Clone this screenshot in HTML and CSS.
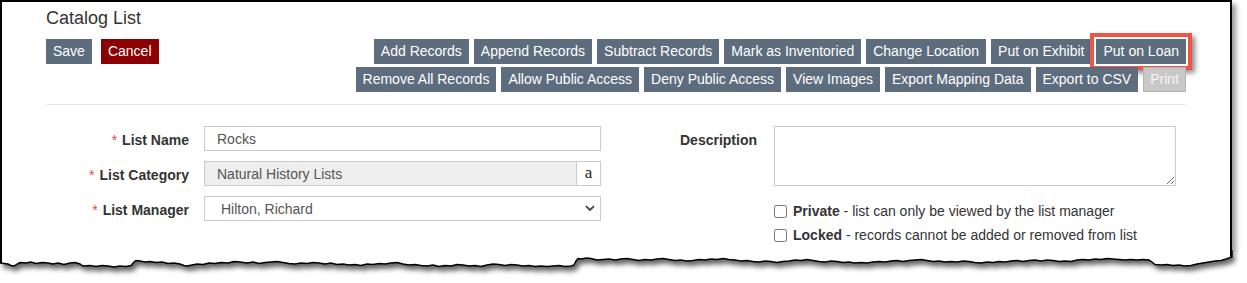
FILE: index.html
```html
<!DOCTYPE html>
<html lang="en">
<head>
    <meta charset="UTF-8">
    <meta name="viewport" content="width=device-width, initial-scale=1.0">
    <title>Catalog List</title>
    <link rel="stylesheet" href="styles.css">
</head>
<body>
    <div class="shot">
        <div class="page">
            <h1 class="title">Catalog List</h1>

            <div class="toolbar">
                <div class="main-actions">
                    <button class="btn">Save</button>
                    <button class="btn btn-cancel">Cancel</button>
                </div>
                <div class="list-actions">
                    <div class="btn-row">
                        <button class="btn">Add Records</button>
                        <button class="btn">Append Records</button>
                        <button class="btn">Subtract Records</button>
                        <button class="btn">Mark as Inventoried</button>
                        <button class="btn">Change Location</button>
                        <button class="btn">Put on Exhibit</button>
                        <button class="btn btn-callout">Put on Loan</button>
                    </div>
                    <div class="btn-row">
                        <button class="btn">Remove All Records</button>
                        <button class="btn">Allow Public Access</button>
                        <button class="btn">Deny Public Access</button>
                        <button class="btn">View Images</button>
                        <button class="btn">Export Mapping Data</button>
                        <button class="btn">Export to CSV</button>
                        <button class="btn btn-disabled">Print</button>
                    </div>
                </div>
            </div>

            <hr class="divider">

            <form class="list-form">
                <div class="fields">
                    <label class="field-label" for="list-name"><span class="req">*</span>List Name</label>
                    <input class="field" type="text" id="list-name" value="Rocks">

                    <label class="field-label" for="list-category"><span class="req">*</span>List Category</label>
                    <div class="field field-lookup">
                        <input type="text" id="list-category" value="Natural History Lists" readonly>
                        <span class="lookup-btn">a</span>
                    </div>

                    <label class="field-label" for="list-manager"><span class="req">*</span>List Manager</label>
                    <div class="select-wrap">
                        <select class="field" id="list-manager">
                            <option>Hilton, Richard</option>
                        </select>
                        <svg class="chevron" width="10" height="7" viewBox="0 0 10 7"><path d="M1 1.2 L5 5 L9 1.2" fill="none" stroke="#444" stroke-width="1.8"/></svg>
                    </div>
                </div>

                <div class="fields fields-right">
                    <label class="field-label" for="description">Description</label>
                    <textarea class="field field-area" id="description"></textarea>

                    <span></span>
                    <div class="checks">
                        <label class="check"><input type="checkbox"><b>Private</b>&nbsp;- list can only be viewed by the list manager</label>
                        <label class="check"><input type="checkbox"><b>Locked</b>&nbsp;- records cannot be added or removed from list</label>
                    </div>
                </div>
            </form>
        </div>
    </div>

    <svg class="tear" width="1247" height="33" viewBox="0 0 1247 33">
        <defs>
            <filter id="soft" x="-5%" y="-50%" width="110%" height="200%">
                <feGaussianBlur stdDeviation="2.4"/>
            </filter>
            <path id="edge-shape" d="M0,250 L0,263 L4,263.5 L8,264 L11,265.5 L14,266 L17,264 L20,262.5 L26,263 L31,262 L36,263.5 L42,262.5 L48,263 L53,264 L58,263 L64,264.5 L70,263 L75,262.5 L80,264 L83,266 L90,265.5 L96,266.5 L102,265.5 L108,266 L114,267 L120,266 L126,266.5 L131,265.5 L134,262 L136,260.5 L140,261 L145,262 L150,261.5 L156,262.5 L162,262 L168,263.5 L174,263 L180,264 L184,265.5 L187,266 L192,265 L197,264 L203,264.5 L209,263 L215,263.5 L221,262.5 L228,263 L234,261.5 L240,262 L247,263 L253,262 L259,263.5 L265,262.5 L271,262 L277,261.5 L283,262.5 L289,263.5 L295,264 L301,263 L307,263.5 L313,262.5 L319,263 L325,264 L331,263 L337,264.5 L343,264 L349,265 L355,264.5 L361,265.5 L367,264 L373,264.5 L379,263.5 L385,264 L391,263 L397,262.5 L403,264 L409,265 L415,264.5 L421,265.5 L427,266 L433,265 L439,266.5 L445,265.5 L451,266 L457,264.5 L463,265 L469,266 L475,265.5 L481,266.5 L487,265 L493,264 L499,264.5 L505,265.5 L511,264.5 L517,265 L523,266 L529,265.5 L535,266.5 L541,266 L547,266.5 L553,266 L559,265.5 L565,266.5 L571,266 L574,265 L576,261 L578,258.5 L582,259 L586,258 L591,258.5 L597,260 L603,259.5 L609,259 L615,260 L621,259 L627,258.5 L633,259.5 L639,260.5 L645,259.5 L651,260 L657,259 L663,258.5 L669,259.5 L675,260.5 L681,260 L687,261 L693,260.5 L699,259.5 L705,260 L711,259 L717,259.5 L723,258.5 L729,259.5 L735,260 L741,261 L747,260.5 L753,261.5 L759,262 L765,261 L771,261.5 L777,262.5 L783,261.5 L789,261 L795,260 L801,260.5 L807,259.5 L813,260.5 L819,261.5 L825,262 L831,261 L837,261.5 L843,262.5 L849,262 L855,263 L861,262.5 L867,263 L873,262 L879,261.5 L885,262 L891,261 L897,260.5 L903,261.5 L909,260.5 L915,260 L921,259.5 L927,260.5 L933,261.5 L939,261 L945,262 L951,261.5 L957,262 L963,261 L969,261.5 L975,262.5 L981,263 L987,262 L993,262.5 L999,261.5 L1005,262 L1011,261 L1017,260.5 L1023,261.5 L1029,260.5 L1035,260 L1041,261 L1047,260 L1053,260.5 L1059,261.5 L1065,261 L1071,261.5 L1077,260 L1083,259.5 L1089,260 L1095,259 L1101,259.5 L1107,258.5 L1113,259 L1119,259.5 L1125,260 L1131,259.5 L1137,260 L1143,259.5 L1149,260 L1152,262 L1155,264.5 L1161,265 L1167,264.5 L1173,265.5 L1179,265 L1185,266 L1191,265.5 L1197,264 L1203,263 L1209,262 L1215,261 L1221,260.5 L1226,259 L1229,258 L1232,257 L1232,250 Z"/>
        </defs>
        <g transform="translate(0,-250)">
            <use href="#edge-shape" class="tear-shadow" transform="translate(3,5)" filter="url(#soft)"/>
            <use href="#edge-shape" class="tear-paper"/>
            <use href="#edge-shape" class="tear-line"/>
            <rect x="0" y="248" width="1232" height="3" fill="#fff"/>
            <line x1="1" y1="248" x2="1" y2="263" stroke="#000" stroke-width="2"/>
            <line x1="1231" y1="248" x2="1231" y2="257" stroke="#000" stroke-width="2"/>
        </g>
    </svg>
</body>
</html>
```

FILE: styles.css
```css
body { margin: 0; background: #fff; font-family: "Liberation Sans", Arial, sans-serif; font-size: 14px; color: #333; }

/* screenshot frame */
.shot { width: 1232px; height: 250px; box-sizing: border-box; border: 2px solid #000; border-bottom: 0; box-shadow: 4px 4px 5px rgba(0, 0, 0, 0.4); }
.page { padding: 6px 44px 0; }
.tear { display: block; }
.tear-shadow { fill: rgba(0, 0, 0, 0.6); }
.tear-paper { fill: #fff; }
.tear-line { fill: none; stroke: #000; stroke-width: 1.4; }

.title { margin: 0; font-size: 18px; line-height: 20px; font-weight: normal; color: #333; }

/* toolbar */
.toolbar { display: flex; justify-content: space-between; align-items: flex-start; margin-top: 11px; }
.main-actions { display: flex; gap: 9px; }
.list-actions { display: flex; flex-direction: column; align-items: flex-end; gap: 3px; }
.btn-row { display: flex; gap: 5px; }
.btn { height: 25px; padding: 0 7px; border: 0; background: #5d6d7e; color: #fff; font-family: "Liberation Sans", Arial, sans-serif; font-size: 14px; line-height: 25px; white-space: nowrap; cursor: pointer; }
.btn-cancel { background: #8b0000; }
.btn-disabled { background: #c8c8c8; color: #f4f4f4; box-shadow: inset 0 0 0 1px #b4b4b4; }
.btn-callout { box-shadow: 0 0 0 2px #fff, 0 0 0 6px #ee5546, 3px 3px 5px 6px rgba(0, 0, 0, 0.45); }

.divider { margin: 12px 0 0; border: 0; border-top: 1px solid #e6e6e6; height: 0; }

/* form */
.list-form { display: flex; margin-top: 21px; }
.fields { display: grid; grid-template-columns: 143px 397px; column-gap: 15px; row-gap: 10px; grid-auto-rows: 25px; }
.fields-right { flex: 1; grid-template-columns: 1fr 402px; column-gap: 17px; grid-auto-rows: auto; row-gap: 0; padding-right: 10px; margin-left: 1px; }
.field-label { display: flex; justify-content: flex-end; align-items: center; height: 25px; padding-top: 3px; box-sizing: border-box; font-weight: bold; color: #333; }
.req { color: #e0474c; font-weight: normal; margin-right: 5px; }

.field { box-sizing: border-box; height: 25px; margin: 0; border: 1px solid #ccc; border-radius: 0; padding: 0 12px; background: #fff; font-family: "Liberation Sans", Arial, sans-serif; font-size: 14px; color: #555; }
.field-lookup { display: flex; padding: 0; background: #eee; }
.field-lookup input { flex: 1; min-width: 0; border: 0; padding: 0 12px; background: transparent; font: inherit; color: #555; outline: none; }
.lookup-btn { width: 23px; border-left: 1px solid #ccc; background: #fff; color: #222; font-family: "Liberation Serif", "Times New Roman", serif; font-size: 17px; line-height: 21px; text-align: center; }

.select-wrap { position: relative; }
.select-wrap select { width: 100%; padding-left: 16px; appearance: none; -webkit-appearance: none; }
.chevron { position: absolute; right: 6px; top: 9px; }

.field-area { height: 60px; padding: 6px 12px; resize: vertical; }

.checks { margin-top: 13px; }
.check { display: flex; align-items: center; height: 24px; color: #333; }
.check input { width: 13px; height: 13px; margin: 0 6px 0 0; }
.check b { color: #333; }
```
